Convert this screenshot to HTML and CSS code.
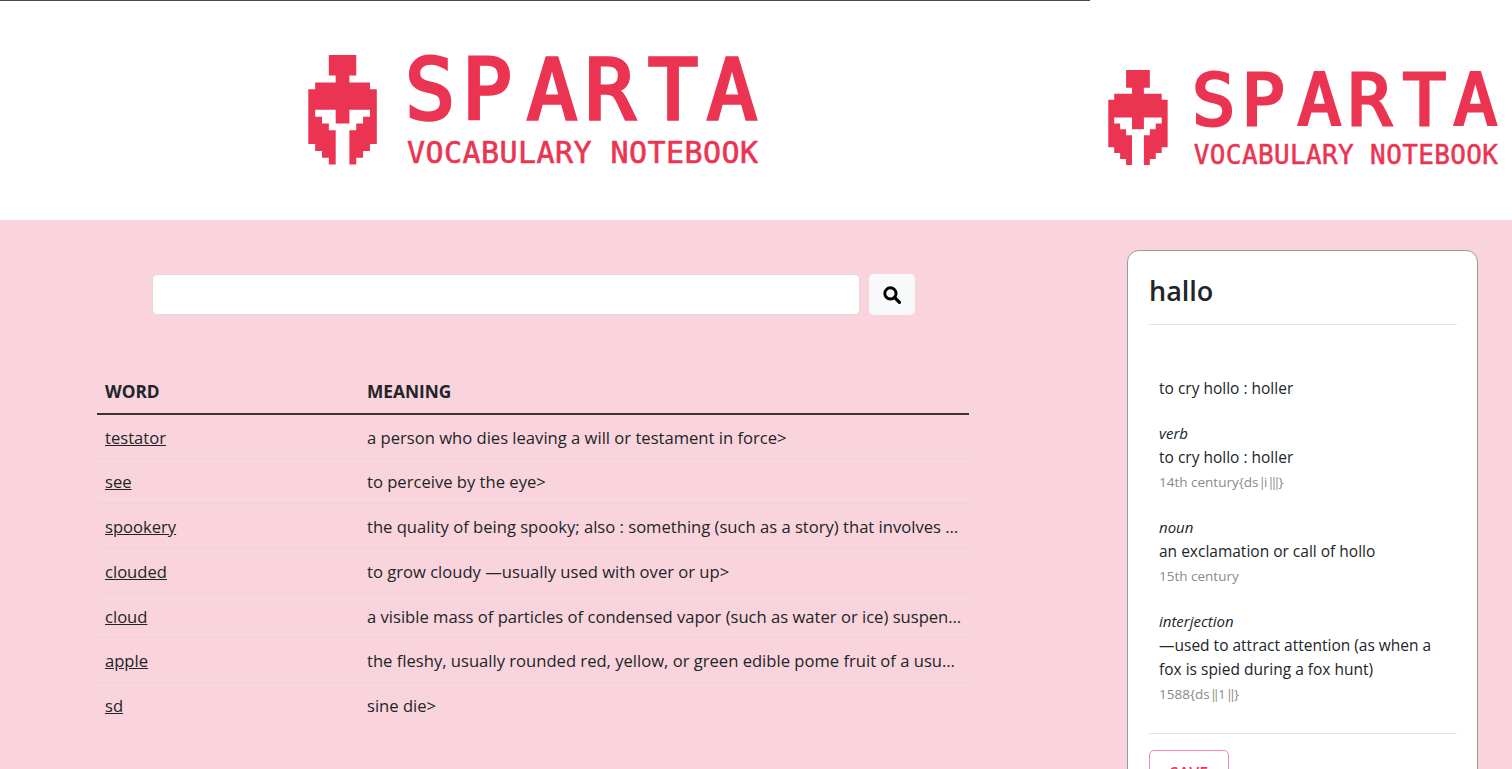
FILE: index.html
```html
<!DOCTYPE html>
<html lang="en">
<head>
<meta charset="utf-8">
<title>Sparta Vocabulary Notebook</title>
<link rel="stylesheet" href="styles.css">
</head>
<body>
<div class="page">
  <header class="top">
    <div class="brand brand-main">
      <svg class="logo logo-large" viewBox="0 0 450 110" role="img" aria-label="Sparta Vocabulary Notebook">
        <path class="logo-mark" transform="translate(0.3 0) scale(6.85)" fill-rule="evenodd" d="M3 0H7V3H6V4H9V5H10V13H9V14H8V15H7V16H6V11H7V10H8V9H9V8H6V10H4V8H1V9H2V10H3V11H4V16H3V15H2V14H1V13H0V5H1V4H4V3H3Z"/>
        <text class="logo-title" x="97 154 219 277 340 399" y="63.5">SPARTA</text>
        <text class="logo-sub" x="99" y="108" textLength="351">VOCABULARY NOTEBOOK</text>
      </svg>
    </div>
    <div class="brand brand-side">
      <svg class="logo logo-small" viewBox="0 0 450 110" role="img" aria-label="Sparta Vocabulary Notebook">
        <path class="logo-mark" transform="translate(0.3 0) scale(6.85)" fill-rule="evenodd" d="M3 0H7V3H6V4H9V5H10V13H9V14H8V15H7V16H6V11H7V10H8V9H9V8H6V10H4V8H1V9H2V10H3V11H4V16H3V15H2V14H1V13H0V5H1V4H4V3H3Z"/>
        <text class="logo-title" x="97 154 219 277 340 399" y="63.5">SPARTA</text>
        <text class="logo-sub" x="99" y="108" textLength="351">VOCABULARY NOTEBOOK</text>
      </svg>
    </div>
  </header>
  <main class="content">
    <section class="list">
      <form class="search">
        <input class="search-input" type="text" aria-label="Search">
        <button class="search-btn" type="button" aria-label="Search">
          <svg class="search-icon" viewBox="0 0 16 16"><circle cx="6.6" cy="6.6" r="5" fill="none" stroke="#000" stroke-width="2.6"/><path d="M10.4 10.4 14.6 14.6" stroke="#000" stroke-width="2.9" stroke-linecap="round"/></svg>
        </button>
      </form>
      <table class="words">
        <thead>
          <tr><th class="col-word">WORD</th><th>MEANING</th></tr>
        </thead>
        <tbody>
          <tr><td><a href="#">testator</a></td><td><div class="clip">a person who dies leaving a will or testament in force&gt;</div></td></tr>
          <tr><td><a href="#">see</a></td><td><div class="clip">to perceive by the eye&gt;</div></td></tr>
          <tr><td><a href="#">spookery</a></td><td><div class="clip">the quality of being spooky; also : something (such as a story) that involves or suggests ghosts</div></td></tr>
          <tr><td><a href="#">clouded</a></td><td><div class="clip">to grow cloudy —usually used with over or up&gt;</div></td></tr>
          <tr><td><a href="#">cloud</a></td><td><div class="clip">a visible mass of particles of condensed vapor (such as water or ice) suspended in the atmosphere</div></td></tr>
          <tr><td><a href="#">apple</a></td><td><div class="clip">the fleshy, usually rounded red, yellow, or green edible pome fruit of a usually cultivated tree</div></td></tr>
          <tr><td><a href="#">sd</a></td><td><div class="clip">sine die&gt;</div></td></tr>
        </tbody>
      </table>
    </section>
    <aside class="card">
      <h3 class="card-title">hallo</h3>
      <div class="card-body">
        <p class="short">to cry hollo : holler</p>
        <div class="entry">
          <em>verb</em>
          <p>to cry hollo : holler</p>
          <small>14th century{ds<span class="pipe">|</span>i<span class="pipe">|||</span>}</small>
        </div>
        <div class="entry">
          <em>noun</em>
          <p>an exclamation or call of hollo</p>
          <small>15th century</small>
        </div>
        <div class="entry">
          <em>interjection</em>
          <p>—used to attract attention (as when a fox is spied during a fox hunt)</p>
          <small>1588{ds<span class="pipe">||</span>1<span class="pipe">||</span>}</small>
        </div>
      </div>
      <div class="card-foot">
        <button class="save" type="button">SAVE</button>
      </div>
    </aside>
  </main>
</div>
</body>
</html>
```
FILE: styles.css
```css
* { box-sizing: border-box; }
html, body { margin: 0; height: 100%; overflow: hidden; }
body {
  background: #fad4dc;
  color: #212529;
  font-family: "Open Sans", "Noto Sans", sans-serif;
  font-size: 15.5px;
  line-height: 24px;
}
.page { height: 769px; overflow: hidden; }

.top { display: flex; height: 220px; background: #fff; }
.brand { display: flex; }
.brand-main {
  width: 1090px;
  border-top: 1px solid #4a4a4a;
  padding: 54px 0 0 308px;
}
.brand-side { flex: 1; padding: 70px 0 0 18px; }
.logo { display: block; overflow: visible; }
.logo-large { width: 450px; height: 110px; }
.logo-small { width: 390px; height: 95.33px; }
.logo-mark { fill: #eb3452; }
.logo-title, .logo-sub {
  fill: #eb3452;
  stroke: #eb3452;
  font-family: "DejaVu Sans Mono", monospace;
}
.logo-title { font-size: 83px; stroke-width: 3.5px; }
.logo-sub { font-size: 30px; stroke-width: 0.6px; }

.content { display: flex; align-items: flex-start; }
.list { width: 1090px; padding: 54px 0 0 97px; }

.search { display: flex; gap: 9px; margin: 0 0 58px 55px; }
.search-input {
  width: 708px;
  height: 41px;
  background: #fff;
  border: 1px solid #dfdadd;
  border-radius: 5px;
}
.search-btn {
  width: 46px;
  height: 41px;
  display: flex;
  align-items: center;
  justify-content: center;
  padding: 0 1px 0 0;
  background: #f8f9fa;
  border: 0;
  border-radius: 5px;
}
.search-icon { width: 18px; height: 18px; }

.words { width: 872px; border-collapse: collapse; table-layout: fixed; font-size: 16.6px; }
.words th {
  padding: 7px 8px 9px;
  text-align: left;
  font-size: 17.3px;
  font-weight: 700;
  border-bottom: 2px solid #3a3338;
}
.col-word { width: 262px; }
.words td {
  height: 44.8px;
  padding: 2px 6px 0 8px;
  border-bottom: 1px solid #e6d6dc;
}
.words tr:last-child td { border-bottom: 0; }
.words a { color: #212529; text-decoration: underline; }
.clip { overflow: hidden; white-space: nowrap; text-overflow: ellipsis; }

.card {
  width: 351px;
  margin: 30px 0 0 37px;
  padding: 21px 20px 30px 21px;
  background: #fff;
  border: 1px solid #999;
  border-radius: 12px;
}
.card-title {
  margin: 0;
  padding-bottom: 14px;
  font-size: 27px;
  font-weight: 600;
  line-height: 38px;
  border-bottom: 1px solid #e4e4e4;
}
.card-body { padding: 51px 10px 26px; }
.card-body p { margin: 0; line-height: 24.6px; }
.card-body .short { margin-bottom: 20.2px; }
.entry { margin-bottom: 19.8px; }
.entry em { display: block; font-size: 15px; }
.entry small { display: block; margin-top: 0.5px; color: #8a8a8a; font-size: 13.5px; line-height: 25px; }
.entry:last-child { margin-bottom: 0; }
.pipe { letter-spacing: -4.5px; margin-right: 2.5px; }
.card-foot { border-top: 1px solid #e4e4e4; padding-top: 16px; }
.save {
  width: 80px;
  height: 46px;
  background: #fff;
  color: #f0365a;
  border: 1px solid #f78ca0;
  border-radius: 5px;
  font: 600 16px "Open Sans", sans-serif;
}
```
